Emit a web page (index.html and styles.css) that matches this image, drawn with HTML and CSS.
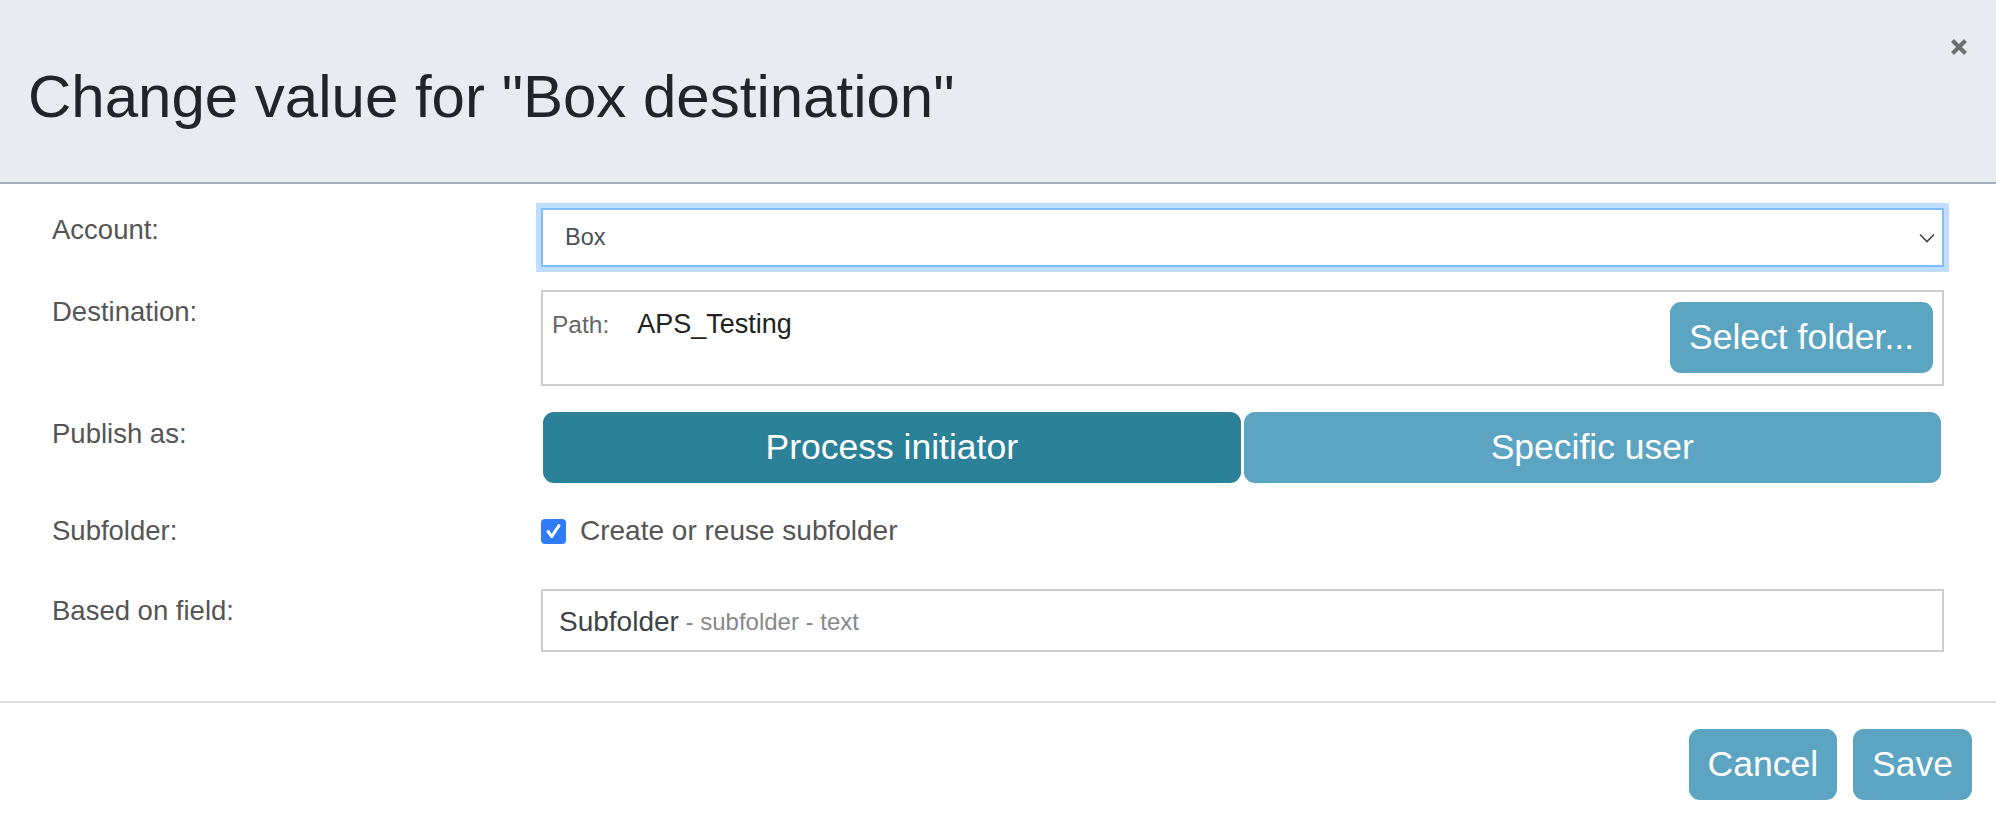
FILE: index.html
```html
<!DOCTYPE html>
<html>
<head>
<meta charset="utf-8">
<link rel="stylesheet" href="styles.css">
</head>
<body>
<div class="modal">
  <header class="modal-header">
    <h1 class="title">Change value for "Box destination"</h1>
    <button class="close" aria-label="Close">
      <svg width="18" height="18" viewBox="0 0 18 18"><path d="M2.5 2.5 L15.5 15.5 M15.5 2.5 L2.5 15.5" stroke="#6f6f6f" stroke-width="4.2" stroke-linecap="butt"/></svg>
    </button>
  </header>
  <div class="modal-body">
    <div class="row row-account">
      <div class="label">Account:</div>
      <div class="control">
        <div class="select">
          <span class="select-value">Box</span>
          <svg class="chevron" width="16" height="10" viewBox="0 0 16 10"><path d="M1 1.5 L8 8.5 L15 1.5" fill="none" stroke="#444" stroke-width="1.6"/></svg>
        </div>
      </div>
    </div>
    <div class="row row-dest">
      <div class="label">Destination:</div>
      <div class="control">
        <div class="dest-box">
          <div class="path"><span class="path-label">Path:</span><span class="path-value">APS_Testing</span></div>
          <button class="btn">Select folder...</button>
        </div>
      </div>
    </div>
    <div class="row row-publish">
      <div class="label">Publish as:</div>
      <div class="control">
        <div class="btn-group">
          <button class="btn btn-seg active">Process initiator</button>
          <button class="btn btn-seg">Specific user</button>
        </div>
      </div>
    </div>
    <div class="row row-sub">
      <div class="label">Subfolder:</div>
      <div class="control">
        <label class="check">
          <span class="checkbox"><svg width="25" height="25" viewBox="0 0 25 25"><path d="M7 12.5 L10.8 17.5 L18 6.5" fill="none" stroke="#fff" stroke-width="3" stroke-linecap="round" stroke-linejoin="round"/></svg></span>
          <span class="check-text">Create or reuse subfolder</span>
        </label>
      </div>
    </div>
    <div class="row row-field">
      <div class="label">Based on field:</div>
      <div class="control">
        <div class="input"><span class="field-name">Subfolder</span><span class="field-meta"> - subfolder - text</span></div>
      </div>
    </div>
  </div>
  <footer class="modal-footer">
    <button class="btn">Cancel</button>
    <button class="btn">Save</button>
  </footer>
</div>
</body>
</html>
```
FILE: styles.css
```css
* { box-sizing: border-box; }
html, body { margin: 0; padding: 0; background: #fff; }
body {
  font-family: "Liberation Sans", Arial, Helvetica, sans-serif;
  width: 1996px;
  height: 826px;
  overflow: hidden;
}
.modal { width: 1996px; }
.modal-header {
  height: 184px;
  background: #e8ecf0;
  border-bottom: 2px solid #a7aeba;
  display: flex;
  justify-content: space-between;
  align-items: flex-start;
  padding: 38px 28px 0 28px;
}
.title {
  margin: 23px 0 0 0;
  font-size: 60px;
  line-height: 72px;
  font-weight: normal;
  color: #212529;
}
.close {
  border: 0;
  background: none;
  padding: 0;
  margin: 0;
  width: 18px;
  height: 18px;
  display: block;
}
.close svg { display: block; }
.modal-body {
  padding: 24px 52px 49px 52px;
}
.row { display: flex; align-items: flex-start; }
.label {
  width: 489px;
  flex: none;
  font-size: 27.5px;
  line-height: 40px;
  padding-top: 2px;
  color: #555;
}
.control { flex: 1; }
.row-dest { margin-top: 23px; }
.row-publish { margin-top: 26px; }
.row-sub { margin-top: 26px; }
.row-field { margin-top: 38px; }

.select {
  height: 59px;
  border: 2px solid #80bdff;
  box-shadow: 0 0 0 5px rgba(0, 123, 255, 0.25);
  display: flex;
  align-items: center;
  justify-content: space-between;
  padding: 0 7px 0 22px;
  background: #fff;
}
.select-value { font-size: 23.5px; color: #495057; }
.chevron { display: block; }

.dest-box {
  border: 2px solid #ccc;
  display: flex;
  justify-content: space-between;
  align-items: flex-start;
  padding: 10px 9px 11px 9px;
}
.path { padding-top: 6px; line-height: 32px; }
.path-label { font-size: 24.5px; color: #666; margin-right: 28px; }
.path-value { font-size: 27px; color: #222; }

.btn {
  font-family: "Liberation Sans", Arial, Helvetica, sans-serif;
  font-size: 35.5px;
  color: #fff;
  background: #5ba4c2;
  border: 0;
  border-radius: 11px;
  height: 71px;
  padding: 0 19px;
  line-height: 71px;
  margin: 0;
}
.btn-group {
  display: flex;
  gap: 3px;
  margin: 0 3px 0 2px;
}
.btn-seg { flex: 1; padding: 0; }
.btn-seg.active { background: #2b8197; }

.check {
  display: flex;
  align-items: center;
  height: 40px;
  margin-top: 2px;
}
.checkbox {
  width: 25px;
  height: 25px;
  background: #2f7cf6;
  border-radius: 4px;
  display: block;
  flex: none;
}
.checkbox svg { display: block; }
.check-text {
  font-size: 28px;
  color: #555;
  margin-left: 14px;
}

.input {
  height: 63px;
  border: 2px solid #ccc;
  display: flex;
  align-items: center;
  padding: 2px 16px 0 16px;
  white-space: pre;
}
.field-name { font-size: 28px; color: #3e4348; }
.field-meta { font-size: 24px; color: #888; }

.modal-footer {
  border-top: 2px solid #dee2e6;
  display: flex;
  justify-content: flex-end;
  gap: 16px;
  padding: 26px 24px 27px 24px;
}
```
